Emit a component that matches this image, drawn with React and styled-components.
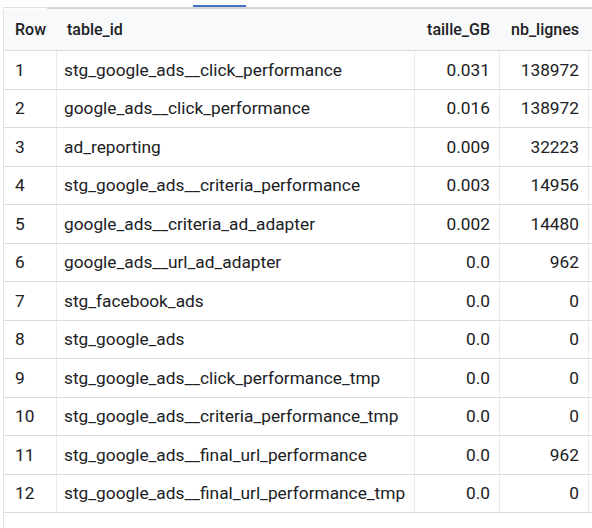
import styled, { createGlobalStyle } from 'styled-components';

const rows = [
    ['stg_google_ads__click_performance', '0.031', '138972'],
    ['google_ads__click_performance', '0.016', '138972'],
    ['ad_reporting', '0.009', '32223'],
    ['stg_google_ads__criteria_performance', '0.003', '14956'],
    ['google_ads__criteria_ad_adapter', '0.002', '14480'],
    ['google_ads__url_ad_adapter', '0.0', '962'],
    ['stg_facebook_ads', '0.0', '0'],
    ['stg_google_ads', '0.0', '0'],
    ['stg_google_ads__click_performance_tmp', '0.0', '0'],
    ['stg_google_ads__criteria_performance_tmp', '0.0', '0'],
    ['stg_google_ads__final_url_performance', '0.0', '962'],
    ['stg_google_ads__final_url_performance_tmp', '0.0', '0']
];

export default function App() {
    return (
        <Page>
            <GlobalStyle />
            <Tabs>
                <Indicator />
            </Tabs>
            <TabLine>
                <LineStart />
                <LineRest />
            </TabLine>
            <Panel>
                <HeaderRow>
                    <HeadCell $first>Row</HeadCell>
                    <HeadCell>table_id</HeadCell>
                    <HeadCell $num>taille_GB</HeadCell>
                    <HeadCell $num>nb_lignes</HeadCell>
                    <HeadCell />
                </HeaderRow>
                {rows.map((r, i) => (
                    <Row key={i}>
                        <Cell $first>{i + 1}</Cell>
                        <Cell>{r[0]}</Cell>
                        <Cell $num>{r[1]}</Cell>
                        <Cell $num>{r[2]}</Cell>
                        <Filler />
                    </Row>
                ))}
            </Panel>
        </Page>
    );
}

const GlobalStyle = createGlobalStyle`
    body {
        margin: 0;
        background: #FFFFFF;
        font-family: Roboto, 'Liberation Sans', sans-serif;
        color: #202124;
    }
`;

const Page = styled.div`
    width: 592px;
    height: 528px;
    overflow: hidden;
    padding-left: 3px;
    box-sizing: border-box;
`;

const Tabs = styled.div`
    height: 7px;
    display: flex;
    align-items: flex-end;
`;

const Indicator = styled.div`
    width: 53px;
    height: 2px;
    margin-left: 190px;
    background: #4472C4;
`;

const TabLine = styled.div`
    display: flex;
    align-items: flex-start;
    height: 2px;
`;

const LineStart = styled.div`
    width: 44px;
    height: 1px;
    background: #E0E0E0;
`;

const LineRest = styled.div`
    flex: 1;
    height: 2px;
    background: #D6D6D6;
`;

const Panel = styled.div`
    border-left: 1px solid #E3E3E3;
    min-height: 520px;
`;

const grid = `
    display: grid;
    grid-template-columns: 53px 358px 85px 89px 1fr;
    border-bottom: 1px solid #DADCE0;
    box-sizing: border-box;
`;

const HeaderRow = styled.div`
    ${grid}
    height: 42px;
    background: #F8F9FA;
`;

const Row = styled.div`
    ${grid}
    height: 38.5px;
`;

const HeadCell = styled.div`
    display: flex;
    align-items: center;
    justify-content: ${p => p.$num ? 'flex-end' : 'flex-start'};
    padding: ${p => p.$first ? '0 8px 0 11px' : '0 10px 0 10px'};
    font-size: 16px;
    font-weight: 500;
    white-space: nowrap;
`;

const Cell = styled.div`
    display: flex;
    align-items: center;
    justify-content: ${p => p.$num ? 'flex-end' : 'flex-start'};
    padding: ${p => p.$first ? '0 8px 0 11px' : '0 9px 0 7px'};
    border-right: 1px solid #E8EAED;
    font-size: 17.3px;
    white-space: nowrap;
`;

const Filler = styled.div``;
